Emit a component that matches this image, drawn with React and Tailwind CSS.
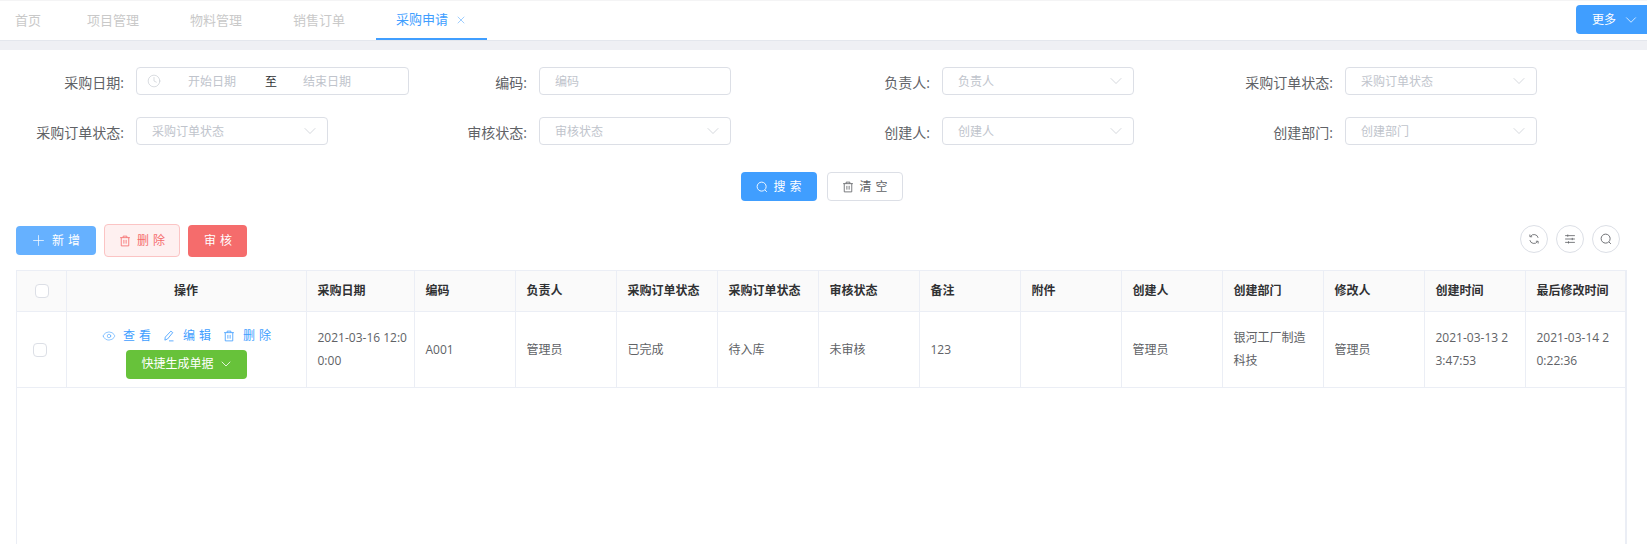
import React from "react";
import { ChevronDown, Clock, Plus, X, Eye } from "lucide-react";

const CJK = "font-['Open_Sans','Noto_Sans_CJK_SC',sans-serif]";

// 垃圾桶图标
const TrashIcon = ({ className = "" }) => (
  <svg viewBox="0 0 16 16" fill="none" stroke="currentColor" strokeWidth="1.1" className={className}>
    <path d="M1.5 3.5h13M5.5 3.5V1.5h5v2M3 3.5v11h10v-11M6.5 6.5v5M9.5 6.5v5" />
  </svg>
);

const SearchIcon = ({ className = "" }) => (
  <svg viewBox="0 0 16 16" fill="none" stroke="currentColor" strokeWidth="1.2" className={className}>
    <circle cx="7.5" cy="7.5" r="6" />
    <path d="M12 12l2.5 2.5" />
  </svg>
);

const EditIcon = ({ className = "" }) => (
  <svg viewBox="0 0 16 16" fill="none" stroke="currentColor" strokeWidth="1.1" className={className}>
    <path d="M10.5 1.5l2.5 2L6 12l-3.5 1.5L3 9.5zM8 14.5h6" />
  </svg>
);

const RefreshIcon = ({ className = "" }) => (
  <svg viewBox="0 0 16 16" fill="none" stroke="currentColor" strokeWidth="1.1" className={className}>
    <path d="M13.5 6.5A5.5 5.5 0 0 0 3.5 4.5M2.5 2v3h3M2.5 9.5a5.5 5.5 0 0 0 10 2M13.5 14v-3h-3" />
  </svg>
);

const SlidersIcon = ({ className = "" }) => (
  <svg viewBox="0 0 16 16" fill="none" stroke="currentColor" strokeWidth="1.1" className={className}>
    <path d="M1.5 3.5h13M1.5 8h13M1.5 12.5h13M5 2v3M11 6.5v3M6 11v3" />
  </svg>
);

const SelectBox = ({ text }) => (
  <div className="flex h-[28px] w-[192px] items-center justify-between rounded border border-[#dcdfe6] pl-[15px] pr-[7px] text-[12px] text-[#c0c4cc]">
    <span className="pt-[2px]">{text}</span>
    <ChevronDown size={20} strokeWidth={0.8} />
  </div>
);

const Field = ({ label, children }) => (
  <div className="flex items-center">
    <label className="w-[124px] shrink-0 pt-[2px] text-right text-[14px] text-[#606266]">{label}:</label>
    <div className="ml-[12px]">{children}</div>
  </div>
);

const tabs = ["首页", "项目管理", "物料管理", "销售订单"];

const columns = [
  { title: "采购日期", w: "w-[108px]", value: "2021-03-16 12:00:00", cell: "pl-[11px] pr-0" },
  { title: "编码", w: "w-[101px]", value: "A001" },
  { title: "负责人", w: "w-[101px]", value: "管理员" },
  { title: "采购订单状态", w: "w-[101px]", value: "已完成" },
  { title: "采购订单状态", w: "w-[101px]", value: "待入库" },
  { title: "审核状态", w: "w-[101px]", value: "未审核" },
  { title: "备注", w: "w-[101px]", value: "123" },
  { title: "附件", w: "w-[101px]", value: "" },
  { title: "创建人", w: "w-[101px]", value: "管理员" },
  { title: "创建部门", w: "w-[101px]", value: "银河工厂制造科技" },
  { title: "修改人", w: "w-[101px]", value: "管理员" },
  { title: "创建时间", w: "w-[101px]", value: "2021-03-13 23:47:53" },
  { title: "最后修改时间", w: "w-[100px]", value: "2021-03-14 20:22:36" },
];

export default function App() {
  return (
    <div className={`flex h-[544px] w-[1647px] flex-col overflow-hidden bg-white ${CJK}`}>
      {/* 顶部标签栏 */}
      <div className="flex h-[41px] shrink-0 items-stretch justify-between border-t border-[#f4f4f5] border-b-[#e4e7ed] border-b shadow-[0_1px_2px_rgba(0,0,0,0.05)]">
        <div className="flex items-stretch text-[13px] text-[#c9c9c9]">
          <div className="flex items-center pl-[15px] pr-[46px]">{tabs[0]}</div>
          {tabs.slice(1).map((t) => (
            <div key={t} className="flex items-center pr-[51px]">{t}</div>
          ))}
          <div className="-ml-[20px] flex items-center border-b-2 border-[#409eff] pl-[20px] pr-[20px] text-[#409eff]">
            <span>采购申请</span>
            <X size={12} strokeWidth={1} className="ml-[7px]" />
          </div>
        </div>
        <button className="mt-[4px] flex h-[29px] w-[71px] items-center gap-[6px] rounded-l bg-[#409eff] pl-[16px] text-[12px] text-white">
          更多
          <ChevronDown size={18} strokeWidth={1} />
        </button>
      </div>
      <div className="h-[9px] shrink-0 bg-[#eff0f4]" />

      {/* 搜索条件 */}
      <div className="grid shrink-0 grid-cols-[repeat(4,403px)] gap-y-[22px] pt-[17px]">
        <Field label="采购日期">
          <div className="flex h-[28px] w-[273px] items-center rounded border border-[#dcdfe6] pl-[10px] text-[12px] text-[#c0c4cc]">
            <Clock size={14} strokeWidth={1} />
            <span className="ml-[27px] pt-[2px]">开始日期</span>
            <span className="ml-[29px] pt-[2px] text-[#303133]">至</span>
            <span className="ml-[26px] pt-[2px]">结束日期</span>
          </div>
        </Field>
        <Field label="编码">
          <div className="flex h-[28px] w-[192px] items-center rounded border border-[#dcdfe6] pl-[15px] pt-[2px] text-[12px] text-[#c0c4cc]">编码</div>
        </Field>
        <Field label="负责人"><SelectBox text="负责人" /></Field>
        <Field label="采购订单状态"><SelectBox text="采购订单状态" /></Field>
        <Field label="采购订单状态"><SelectBox text="采购订单状态" /></Field>
        <Field label="审核状态"><SelectBox text="审核状态" /></Field>
        <Field label="创建人"><SelectBox text="创建人" /></Field>
        <Field label="创建部门"><SelectBox text="创建部门" /></Field>
      </div>

      <div className="mt-[27px] flex shrink-0 justify-center gap-[10px] pr-[3px]">
        <button className="flex h-[29px] w-[76px] items-center justify-center gap-[5px] rounded bg-[#409eff] pl-[4px] pt-[1px] text-[12px] tracking-[4px] text-white">
          <SearchIcon className="h-[12px] w-[12px]" />
          搜索
        </button>
        <button className="flex h-[29px] w-[76px] items-center justify-center gap-[5px] rounded border border-[#dcdfe6] pl-[4px] pt-[1px] text-[12px] tracking-[4px] text-[#606266]">
          <TrashIcon className="h-[12px] w-[12px]" />
          清空
        </button>
      </div>

      {/* 操作按钮 */}
      <div className="mt-[23px] flex h-[33px] shrink-0 items-center justify-between pl-[16px] pr-[27px]">
        <div className="flex items-center gap-[8px]">
          <button className="flex h-[29px] w-[80px] items-center justify-center gap-[5px] rounded bg-[#66b1ff] pl-[2px] text-[12px] tracking-[4px] text-white">
            <Plus size={17} strokeWidth={1} />
            新增
          </button>
          <button className="flex h-[33px] w-[76px] items-center justify-center gap-[6px] rounded border border-[#fbc4c4] bg-[#fef0f0] pl-[4px] text-[12px] tracking-[4px] text-[#f56c6c]">
            <TrashIcon className="h-[12px] w-[12px]" />
            删除
          </button>
          <button className="h-[32px] w-[59px] rounded bg-[#f56c6c] pl-[5px] text-[12px] tracking-[4px] text-white">审核</button>
        </div>
        <div className="flex gap-[8px] pb-[3px] text-[#606266]">
          <button className="flex h-[28px] w-[28px] items-center justify-center rounded-full border border-[#dcdfe6]"><RefreshIcon className="h-[12px] w-[12px]" /></button>
          <button className="flex h-[28px] w-[28px] items-center justify-center rounded-full border border-[#dcdfe6]"><SlidersIcon className="h-[12px] w-[12px]" /></button>
          <button className="flex h-[28px] w-[28px] items-center justify-center rounded-full border border-[#dcdfe6]"><SearchIcon className="h-[12px] w-[12px]" /></button>
        </div>
      </div>

      {/* 表格 */}
      <div className="ml-[16px] mt-[13px] w-[1611px] flex-1 border-l border-t border-r-2 border-[#ebeef5]">
        <table className="w-full table-fixed border-collapse text-[12px]">
          <colgroup>
            <col className="w-[49px]" />
            <col className="w-[240px]" />
            {columns.map((c, i) => <col key={i} className={c.w} />)}
          </colgroup>
          <thead>
            <tr className="h-[40px] border-b border-[#ebeef5] bg-[#fafafa] font-bold text-[#303133]">
              <th className="border-r border-[#ebeef5]">
                <span className="ml-[18px] block h-[14px] w-[14px] rounded-sm border border-[#dcdfe6] bg-white" />
              </th>
              <th className="border-r border-[#ebeef5] text-center">操作</th>
              {columns.map((c, i) => (
                <th key={i} className="border-r border-[#ebeef5] pl-[11px] text-left last:border-r-0">{c.title}</th>
              ))}
            </tr>
          </thead>
          <tbody>
            <tr className="h-[76px] border-b border-[#ebeef5] text-[#606266]">
              <td className="border-r border-[#ebeef5]">
                <span className="ml-[16px] mt-[2px] block h-[14px] w-[14px] rounded-sm border border-[#dcdfe6] bg-white" />
              </td>
              <td className="border-r border-[#ebeef5] pt-[17px] align-top">
                <div className="flex flex-col items-center">
                  <div className="ml-[5px] flex h-[14px] items-center gap-[8px] tracking-[4px] text-[#409eff]">
                    <span className="flex items-center gap-[7px]"><Eye size={14} strokeWidth={1} />查看</span>
                    <span className="flex items-center gap-[8px]"><EditIcon className="h-[12px] w-[12px]" />编辑</span>
                    <span className="flex items-center gap-[8px]"><TrashIcon className="h-[12px] w-[12px]" />删除</span>
                  </div>
                  <button className="mt-[7px] flex h-[29px] w-[121px] items-center justify-center gap-[4px] rounded bg-[#67c23a] pl-[3px] text-white">
                    快捷生成单据
                    <ChevronDown size={16} strokeWidth={1.2} />
                  </button>
                </div>
              </td>
              {columns.map((c, i) => (
                <td key={i} className={`border-r border-[#ebeef5] leading-[23px] break-all last:border-r-0 ${c.cell || "pl-[11px] pr-[9px]"}`}>{c.value}</td>
              ))}
            </tr>
          </tbody>
        </table>
      </div>
    </div>
  );
}
